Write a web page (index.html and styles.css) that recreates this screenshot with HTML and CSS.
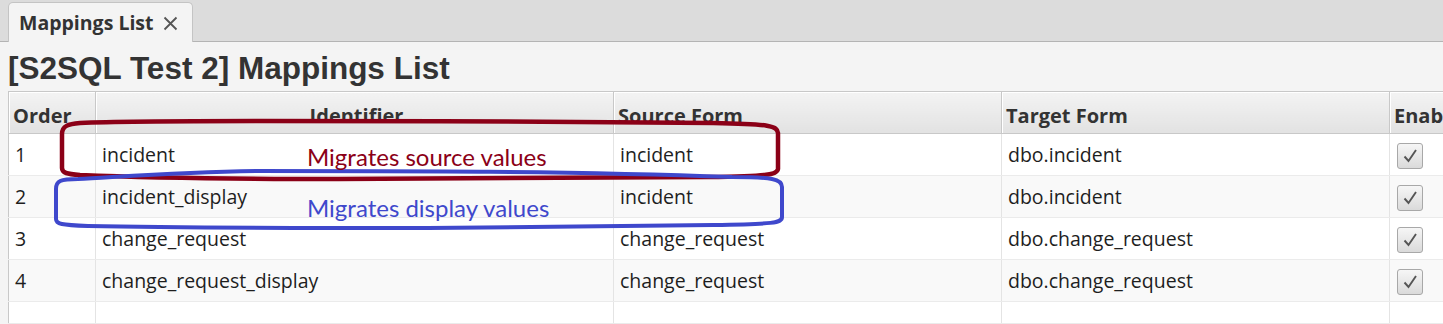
FILE: index.html
```html
<!DOCTYPE html>
<html lang="en">
<head>
    <meta charset="UTF-8">
    <title>Mappings List</title>
    <link rel="stylesheet" href="styles.css">
</head>
<body>
    <div class="tab-bar">
        <div class="tab">
            <span class="tab-title">Mappings List</span>
            <svg class="tab-close" width="15" height="15" viewBox="0 0 15 15">
                <path d="M1.5 1.5 L13.5 13.5 M13.5 1.5 L1.5 13.5" stroke="#555" stroke-width="1.8" fill="none"/>
            </svg>
        </div>
    </div>

    <h1 class="page-title">[S2SQL Test 2] Mappings List</h1>

    <div class="table-wrap">
        <table class="mappings">
            <thead>
                <tr>
                    <th class="col-order">Order</th>
                    <th class="col-id center">Identifier</th>
                    <th class="col-src">Source Form</th>
                    <th class="col-tgt">Target Form</th>
                    <th class="col-en">Enabled</th>
                </tr>
            </thead>
            <tbody>
                <tr>
                    <td>1</td>
                    <td>incident</td>
                    <td>incident</td>
                    <td>dbo.incident</td>
                    <td><span class="check"><svg width="20" height="20" viewBox="0 0 20 20"><path d="M4.5 10.5 L8.5 15 L16 4" stroke="#555" stroke-width="1.9" fill="none"/></svg></span></td>
                </tr>
                <tr>
                    <td>2</td>
                    <td>incident_display</td>
                    <td>incident</td>
                    <td>dbo.incident</td>
                    <td><span class="check"><svg width="20" height="20" viewBox="0 0 20 20"><path d="M4.5 10.5 L8.5 15 L16 4" stroke="#555" stroke-width="1.9" fill="none"/></svg></span></td>
                </tr>
                <tr>
                    <td>3</td>
                    <td>change_request</td>
                    <td>change_request</td>
                    <td>dbo.change_request</td>
                    <td><span class="check"><svg width="20" height="20" viewBox="0 0 20 20"><path d="M4.5 10.5 L8.5 15 L16 4" stroke="#555" stroke-width="1.9" fill="none"/></svg></span></td>
                </tr>
                <tr>
                    <td>4</td>
                    <td>change_request_display</td>
                    <td>change_request</td>
                    <td>dbo.change_request</td>
                    <td><span class="check"><svg width="20" height="20" viewBox="0 0 20 20"><path d="M4.5 10.5 L8.5 15 L16 4" stroke="#555" stroke-width="1.9" fill="none"/></svg></span></td>
                </tr>
                <tr class="empty">
                    <td></td>
                    <td></td>
                    <td></td>
                    <td></td>
                    <td></td>
                </tr>
            </tbody>
        </table>

        <!-- пометки поверх таблицы -->
        <svg class="marks" width="800" height="140" viewBox="0 0 800 140">
            <path d="M72 32 C 60 33, 54 35, 54 43 L 54 77 C 54 82, 59 83, 72 84 C 120 86, 200 88, 330 88 L 700 86 C 758 85, 769 84, 770 78 L 770 42 C 769 35, 763 33, 705 32 C 560 30, 400 30, 250 30 C 170 30, 112 30, 72 32 Z"
                  fill="none" stroke="#8b0017" stroke-width="4.5"/>
            <path d="M70 88 C 52 88, 48 90, 48 98 L 48 128 C 48 133, 53 134, 80 135 C 180 137, 300 137, 420 137 L 705 134 C 766 133, 774 132, 774 126 L 774 96 C 774 88, 764 86, 724 86 C 560 80, 400 80, 250 80 C 170 81, 110 86, 70 88 Z"
                  fill="none" stroke="#3f48cc" stroke-width="4"/>
        </svg>
        <div class="note note-src">Migrates source values</div>
        <div class="note note-disp">Migrates display values</div>
    </div>
</body>
</html>
```

FILE: styles.css
```css
html, body {
    height: 324px;
    overflow: hidden;
}

body {
    margin: 0;
    background-color: #f4f4f4;
    font-family: 'Open Sans', sans-serif;
    color: #1e1e1e;
}

/* Вкладки */
.tab-bar {
    height: 41px;
    background-color: #dcdcdc;
    border-bottom: 1px solid #b4b4b4;
    padding-left: 8px;
    display: flex;
    align-items: flex-end;
}

.tab {
    height: 40px;
    width: 185px;
    box-sizing: border-box;
    background-color: #f4f4f4;
    border: 1px solid #c4c4c4;
    border-bottom: none;
    border-radius: 5px 5px 0 0;
    margin-bottom: -1px;
    display: flex;
    align-items: center;
    padding-left: 10px;
    gap: 9px;
}

.tab-title {
    font-weight: bold;
    font-size: 19.5px;
    color: #333;
}

.tab-close {
    margin-top: 1px;
}

.page-title {
    margin: 0;
    padding: 8px 0 0 8px;
    height: 41px;
    font-family: 'Liberation Sans', Arial, sans-serif;
    font-size: 31.5px;
    line-height: 36px;
    font-weight: bold;
    color: #333;
}

/* Таблица */
.table-wrap {
    position: relative;
    margin-left: 8px;
}

.mappings {
    border-collapse: collapse;
    table-layout: fixed;
    width: 1460px;
    background-color: #fff;
    border-left: 1px solid #c8c8c8;
    border-top: 1px solid #c8c8c8;
}

.mappings th {
    height: 37px;
    padding: 0 0 4px 4px;
    text-align: left;
    font-size: 20px;
    font-weight: bold;
    color: #333;
    background: linear-gradient(#f3f3f3, #e2e2e2);
    border-right: 1px solid #c8c8c8;
    border-bottom: 1px solid #c8c8c8;
    box-shadow: inset 1px 1px 0 #fff;
    vertical-align: bottom;
    white-space: nowrap;
    overflow: hidden;
}

.mappings th.center {
    text-align: center;
}

.col-order { width: 82px; }
.col-id { width: 513px; }
.col-src { width: 383px; }
.col-tgt { width: 383px; }
.col-en { width: 99px; }

.mappings td {
    height: 41px;
    padding: 0 0 0 6px;
    font-size: 19.5px;
    border-right: 1px solid #e4e4e4;
    border-bottom: 1px solid #ebebeb;
    white-space: nowrap;
}

.mappings tbody tr:nth-child(even) td {
    background-color: #f9f9f9;
}

.mappings tr.empty td {
    height: 21px;
}

.check {
    display: inline-flex;
    align-items: center;
    justify-content: center;
    width: 26px;
    height: 26px;
    box-sizing: border-box;
    margin-left: 1px;
    border: 1px solid #a8a8a8;
    border-radius: 3px;
    background: linear-gradient(#f6f6f6, #dadada);
    vertical-align: middle;
}

/* Пометки */
.marks {
    position: absolute;
    left: 0;
    top: 0;
    pointer-events: none;
}

.note {
    position: absolute;
    left: 299px;
    font-family: Lato, sans-serif;
    font-size: 24px;
    white-space: nowrap;
}

.note-src {
    top: 51px;
    color: #8b0017;
}

.note-disp {
    top: 102px;
    color: #3f48cc;
}
```
